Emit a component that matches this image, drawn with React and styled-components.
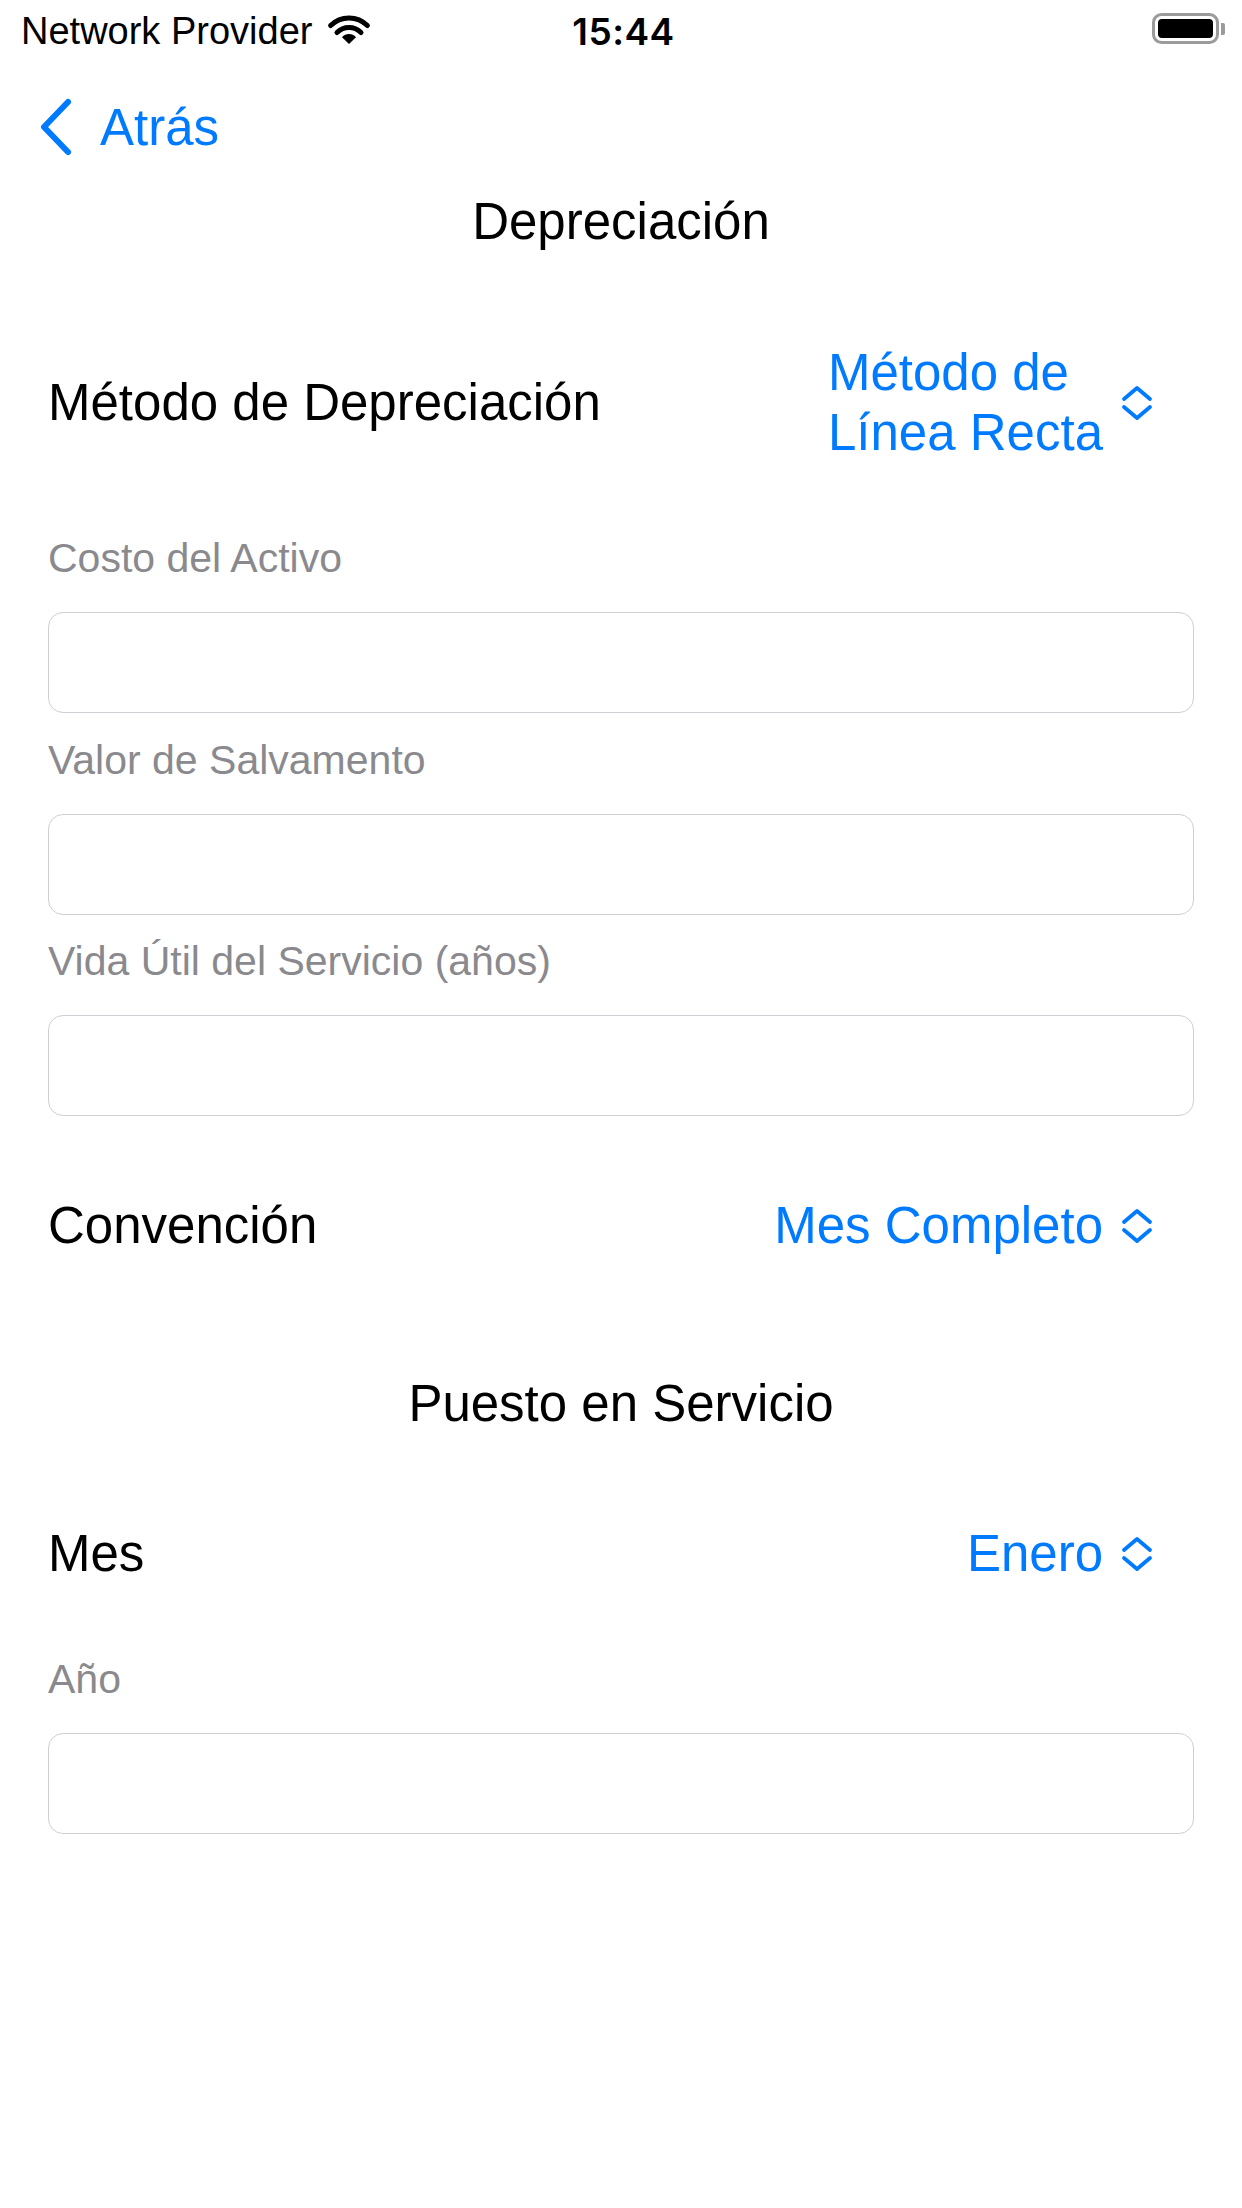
import styled, { createGlobalStyle } from "styled-components";

const GlobalStyle = createGlobalStyle`
  html, body {
    margin: 0;
    padding: 0;
    background: #ffffff;
  }
  body {
    font-family: "Liberation Sans", Arial, sans-serif;
    color: #000000;
  }
  * {
    box-sizing: border-box;
  }
`;

const BLUE = "#007aff";

const WifiIcon = () => (
  <svg width="46" height="32" viewBox="0 0 46 32">
    <path
      d="M4.6 12.6 A26 26 0 0 1 41.4 12.6"
      fill="none"
      stroke="#000"
      strokeWidth="5"
      strokeLinecap="round"
    />
    <path
      d="M11 19.5 A17 17 0 0 1 35 19.5"
      fill="none"
      stroke="#000"
      strokeWidth="5"
      strokeLinecap="round"
    />
    <path d="M23 31 L16 24.2 A9.5 9.5 0 0 1 30 24.2 Z" fill="#000" />
  </svg>
);

const BatteryIcon = () => (
  <svg width="74" height="32" viewBox="0 0 74 32">
    <rect x="1.5" y="1.5" width="64" height="28" rx="8" fill="none" stroke="#9b9b9b" strokeWidth="3" />
    <rect x="6" y="6" width="55" height="19" rx="4" fill="#000" />
    <path d="M69 10 h2 a2 2 0 0 1 2 2 v8 a2 2 0 0 1 -2 2 h-2 Z" fill="#9b9b9b" />
  </svg>
);

const BackChevron = () => (
  <svg width="36" height="60" viewBox="0 0 36 60">
    <polyline
      points="30,5 6,30 30,55"
      fill="none"
      stroke={BLUE}
      strokeWidth="6"
      strokeLinecap="round"
      strokeLinejoin="round"
    />
  </svg>
);

const UpDownChevron = () => (
  <svg width="32" height="36" viewBox="0 0 32 36">
    <polyline
      points="3,14 16,3 29,14"
      fill="none"
      stroke={BLUE}
      strokeWidth="3.8"
      strokeLinecap="round"
      strokeLinejoin="round"
    />
    <polyline
      points="3,22 16,33 29,22"
      fill="none"
      stroke={BLUE}
      strokeWidth="3.8"
      strokeLinecap="round"
      strokeLinejoin="round"
    />
  </svg>
);

const PickerRow = ({ label, lines, top }) => (
  <Row $top={top}>
    <RowLabel>{label}</RowLabel>
    <Picker>
      <PickerValue>
        {lines.map((line, index) => (
          <span key={index}>
            {line}
            {index < lines.length - 1 && <br />}
          </span>
        ))}
      </PickerValue>
      <UpDownChevron />
    </Picker>
  </Row>
);

const Field = ({ label, top }) => (
  <FieldGroup $top={top}>
    <FieldLabel>{label}</FieldLabel>
    <TextInput type="text" />
  </FieldGroup>
);

const App = () => {
  return (
    <>
      <GlobalStyle />
      <Screen>
        <StatusBar>
          <StatusLeft>
            <span>Network Provider</span>
            <WifiIcon />
          </StatusLeft>
          <StatusTime>15:44</StatusTime>
          <StatusRight>
            <BatteryIcon />
          </StatusRight>
        </StatusBar>

        <NavBar>
          <BackButton>
            <BackChevron />
            <span>Atrás</span>
          </BackButton>
        </NavBar>

        <SectionTitle>Depreciación</SectionTitle>

        <Form>
          <PickerRow label="Método de Depreciación" lines={["Método de", "Línea Recta"]} top={91} />
          <Field label="Costo del Activo" top={71} />
          <Field label="Valor de Salvamento" top={23} />
          <Field label="Vida Útil del Servicio (años)" top={22} />
          <PickerRow label="Convención" lines={["Mes Completo"]} top={80} />
          <SectionTitle $top={118}>Puesto en Servicio</SectionTitle>
          <PickerRow label="Mes" lines={["Enero"]} top={90} />
          <Field label="Año" top={71} />
        </Form>
      </Screen>
    </>
  );
};

export default App;

const Screen = styled.div`
  width: 1242px;
  min-height: 2208px;
  background: #ffffff;
  display: flex;
  flex-direction: column;
`;

const StatusBar = styled.div`
  height: 62px;
  display: grid;
  grid-template-columns: 1fr auto 1fr;
  align-items: center;
  padding: 0 16px 0 21px;
  font-size: 38px;
`;

const StatusLeft = styled.div`
  display: flex;
  align-items: center;
  gap: 14px;
  color: #000;

  svg {
    margin-top: -4px;
  }
`;

const StatusTime = styled.div`
  font-family: Inter, "Liberation Sans", sans-serif;
  font-size: 37px;
  font-weight: 600;
  letter-spacing: 0.5px;
`;

const StatusRight = styled.div`
  display: flex;
  justify-content: flex-end;
  align-items: center;
  margin-top: -4px;
`;

const NavBar = styled.div`
  height: 130px;
  display: flex;
  align-items: center;
  padding-left: 38px;
`;

const BackButton = styled.button`
  display: flex;
  align-items: center;
  gap: 26px;
  border: none;
  background: none;
  padding: 0;
  font-family: inherit;
  font-size: 51px;
  color: ${BLUE};
  cursor: pointer;
`;

const SectionTitle = styled.div`
  margin-top: ${(props) => props.$top || 0}px;
  height: 60px;
  line-height: 60px;
  text-align: center;
  font-size: 51px;
`;

const Form = styled.div`
  display: flex;
  flex-direction: column;
  padding: 0 48px;
`;

const Row = styled.div`
  margin-top: ${(props) => props.$top}px;
  display: flex;
  justify-content: space-between;
  align-items: center;
  padding-right: 41px;
  min-height: 60px;
`;

const RowLabel = styled.div`
  font-size: 51px;
  line-height: 60px;
`;

const Picker = styled.div`
  display: flex;
  align-items: center;
  gap: 18px;
  color: ${BLUE};
`;

const PickerValue = styled.div`
  font-size: 51px;
  line-height: 60px;
  text-align: left;
  white-space: nowrap;
`;

const FieldGroup = styled.div`
  margin-top: ${(props) => props.$top}px;
  display: flex;
  flex-direction: column;
  gap: 30px;
`;

const FieldLabel = styled.div`
  font-size: 41px;
  line-height: 48px;
  color: #8a8a8e;
`;

const TextInput = styled.input`
  width: 100%;
  height: 101px;
  border: 1.5px solid #cfcfd3;
  border-radius: 15px;
  padding: 0 20px;
  font-family: inherit;
  font-size: 51px;
  background: #ffffff;
  outline: none;
`;
